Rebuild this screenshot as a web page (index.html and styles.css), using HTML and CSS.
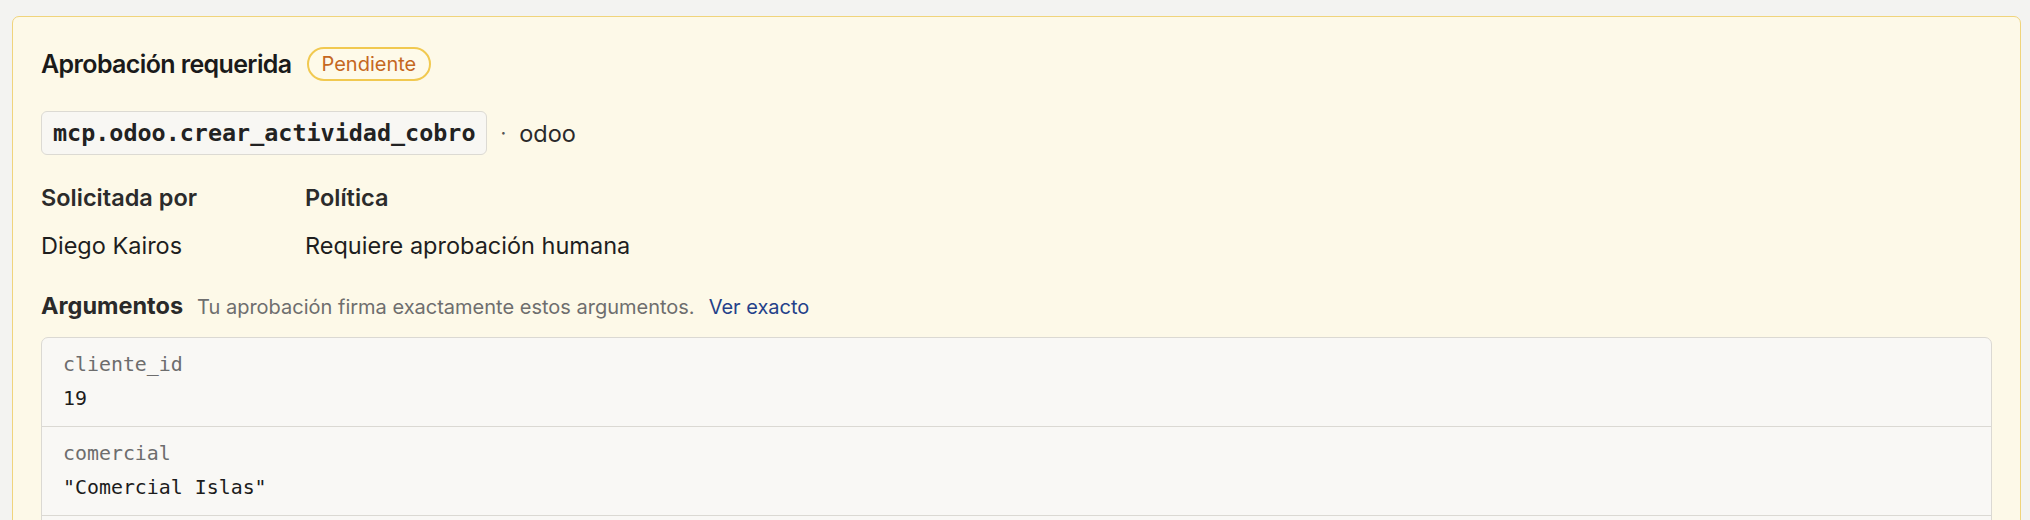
FILE: index.html
```html
<!DOCTYPE html>
<html lang="es">
<head>
<meta charset="utf-8">
<title>Aprobación requerida</title>
<link rel="stylesheet" href="styles.css">
</head>
<body>
<main class="page">
  <section class="card">
    <header class="card-head">
      <h2 class="title">Aprobación requerida</h2>
      <span class="badge">Pendiente</span>
    </header>

    <div class="tool-row">
      <code class="tool-name">mcp.odoo.crear_actividad_cobro</code>
      <span class="sep">·</span>
      <span class="server">odoo</span>
    </div>

    <div class="meta">
      <div class="meta-col">
        <div class="meta-label">Solicitada por</div>
        <div class="meta-value">Diego Kairos</div>
      </div>
      <div class="meta-col">
        <div class="meta-label">Política</div>
        <div class="meta-value">Requiere aprobación humana</div>
      </div>
    </div>

    <div class="args-head">
      <h3 class="args-title">Argumentos</h3>
      <span class="args-hint">Tu aprobación firma exactamente estos argumentos.</span>
      <a class="args-link" href="#">Ver exacto</a>
    </div>

    <div class="args">
      <div class="arg">
        <div class="arg-key">cliente_id</div>
        <div class="arg-val">19</div>
      </div>
      <div class="arg">
        <div class="arg-key">comercial</div>
        <div class="arg-val">"Comercial Islas"</div>
      </div>
      <div class="arg arg-more" aria-hidden="true"></div>
    </div>
  </section>
</main>
</body>
</html>
```

FILE: styles.css
```css
* { box-sizing: border-box; }

html, body {
  margin: 0;
  padding: 0;
  background: #f3f3f1;
  font-family: Inter, "Noto Sans", "Liberation Sans", sans-serif;
  color: #1f1f1f;
}

.page {
  padding: 16px 9px 0 12px;
  height: 520px;
  overflow: hidden;
}

.card {
  background: #fdf9e8;
  border: 1.5px solid #f0d47c;
  border-radius: 7px;
  padding: 30px 28px 40px 28px;
}

.card-head {
  display: flex;
  align-items: center;
  gap: 15px;
  height: 34px;
}

.title {
  margin: 0;
  font-size: 25px;
  line-height: 30px;
  font-weight: 600;
  letter-spacing: -0.025em;
  color: #1a1a1a;
}

.badge {
  display: inline-flex;
  align-items: center;
  height: 34px;
  padding: 0 13px;
  border: 2px solid #f1c950;
  border-radius: 999px;
  background: #fefae9;
  color: #c5681f;
  font-size: 20px;
  line-height: 24px;
}

.tool-row {
  display: flex;
  align-items: center;
  margin-top: 30px;
  font-size: 23.5px;
}

.tool-name {
  display: inline-block;
  padding: 8px 11px;
  border: 1.5px solid #dcdad3;
  border-radius: 6px;
  background: #f8f7f3;
  font-family: "DejaVu Sans Mono", "Liberation Mono", monospace;
  font-weight: 700;
  font-size: 23.4px;
  line-height: 26px;
  color: #222222;
}

.sep {
  margin-left: 13px;
  color: #555555;
  font-size: 20px;
}

.server {
  margin-left: 13px;
  color: #2a2a2a;
}

.meta {
  display: grid;
  grid-template-columns: 264px 1fr;
  margin-top: 26px;
}

.meta-col {
  display: flex;
  flex-direction: column;
  gap: 15px;
}

.meta-label {
  font-size: 23.5px;
  line-height: 33px;
  font-weight: 600;
  color: #2b2b2b;
}

.meta-value {
  font-size: 23.5px;
  line-height: 33px;
  color: #1e1e1e;
}

.args-head {
  display: flex;
  align-items: baseline;
  gap: 14px;
  margin-top: 27px;
  height: 33px;
}

.args-title {
  margin: 0;
  font-size: 23.5px;
  line-height: 33px;
  font-weight: 700;
  color: #2a2a2a;
}

.args-hint {
  font-size: 20px;
  color: #6e6e6e;
}

.args-link {
  font-size: 20px;
  color: #24418a;
  text-decoration: none;
}

.args {
  margin-top: 15px;
  border: 1.5px solid #dbd9d3;
  border-radius: 7px;
  background: #f9f8f5;
  overflow: hidden;
}

.arg {
  padding: 10px 21px 10px;
  border-top: 1.5px solid #dbd9d3;
}

.arg:first-child {
  border-top: 0;
}

.arg-more {
  height: 88px;
}

.arg-key,
.arg-val {
  font-family: "DejaVu Sans Mono", "Liberation Mono", monospace;
  font-size: 19.9px;
  line-height: 34px;
}

.arg-key {
  color: #6d6d6d;
}

.arg-val {
  color: #1c1c1c;
}
```
